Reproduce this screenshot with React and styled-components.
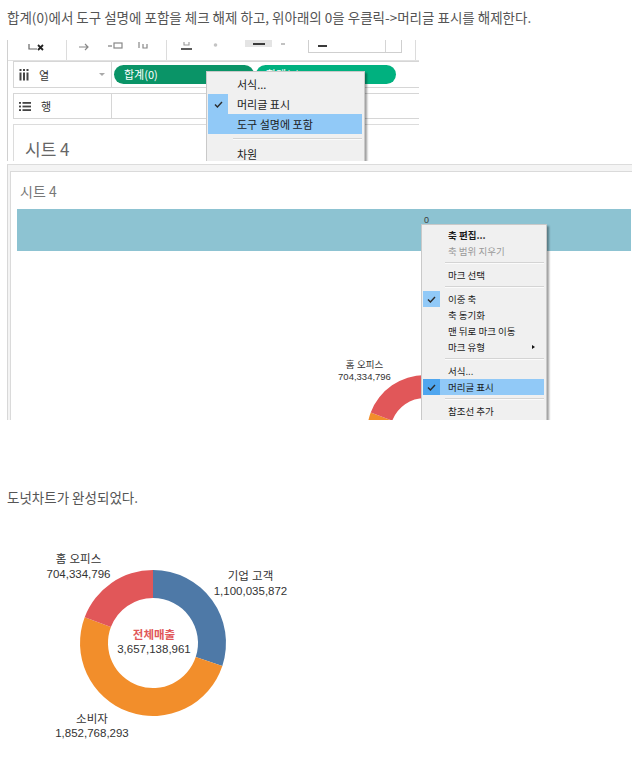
import React from "react";
import styled, { createGlobalStyle } from "styled-components";

const KR = `"Noto Sans CJK KR", "Noto Sans", sans-serif`;
const TAB = `"Liberation Sans", "Noto Sans CJK KR", sans-serif`;

const GlobalStyle = createGlobalStyle`
  html, body { margin: 0; padding: 0; background: #ffffff; }
  body { font-family: ${KR}; }
`;

const SEGMENTS = [
  { name: "기업 고객", value: 1100035872, color: "#4e79a7" },
  { name: "소비자", value: 1852768293, color: "#f28e2b" },
  { name: "홈 오피스", value: 704334796, color: "#e15759" },
];
const TOTAL = SEGMENTS.reduce((s, x) => s + x.value, 0);

function arcPath(cx, cy, R, r, a0, a1) {
  const pt = (rad, a) => [
    cx + rad * Math.sin((a * Math.PI) / 180),
    cy - rad * Math.cos((a * Math.PI) / 180),
  ];
  const [x0, y0] = pt(R, a0);
  const [x1, y1] = pt(R, a1);
  const [x2, y2] = pt(r, a1);
  const [x3, y3] = pt(r, a0);
  const large = a1 - a0 > 180 ? 1 : 0;
  return `M${x0} ${y0} A${R} ${R} 0 ${large} 1 ${x1} ${y1} L${x2} ${y2} A${r} ${r} 0 ${large} 0 ${x3} ${y3} Z`;
}

const Page = styled.div`
  width: 644px;
  height: 765px;
  box-sizing: border-box;
  padding-left: 7px;
  overflow: hidden;
  display: flex;
  flex-direction: column;
  align-items: flex-start;
`;

const Para = styled.p`
  margin: ${(p) => p.$mt}px 0 0;
  font-family: ${KR};
  font-size: 13.5px;
  line-height: 18px;
  color: #555;
  white-space: nowrap;
`;

/* ---------- screenshot 1 ---------- */
const Shot1 = styled.section`
  position: relative;
  margin-top: 14px;
  width: 412px;
  height: 121px;
  box-sizing: border-box;
  border-left: 1px solid #d0d0d0;
  background: #fff;
  overflow: hidden;
  display: flex;
  flex-direction: column;
`;

const Toolbar = styled.div`
  height: 20px;
  flex: none;
  border-bottom: 1px solid #e1e1e1;
  overflow: hidden;
`;

const ToolTrack = styled.div`
  display: flex;
  align-items: center;
  height: 30px;
  margin-top: -10px;
`;

const ToolSlot = styled.div`
  flex: none;
  margin-left: ${(p) => p.$ml}px;
  width: ${(p) => p.$w}px;
  height: 30px;
  display: flex;
  align-items: center;
  justify-content: center;
`;

const ToolDivider = styled.div`
  flex: none;
  margin-left: ${(p) => p.$ml}px;
  width: 1px;
  height: 30px;
  background: #dcdcdc;
`;

const ToolPressed = styled.div`
  flex: none;
  align-self: flex-start;
  margin-left: ${(p) => p.$ml}px;
  width: ${(p) => p.$w}px;
  height: 17px;
  background: #e4e4e4;
  display: flex;
  align-items: flex-end;
  justify-content: center;
  padding-bottom: 2px;
  box-sizing: border-box;
`;

const ToolCombo = styled.div`
  flex: none;
  align-self: flex-start;
  margin-left: ${(p) => p.$ml}px;
  width: ${(p) => p.$w}px;
  height: 23px;
  box-sizing: border-box;
  border: 1px solid #cfcfcf;
  display: flex;
  align-items: flex-end;
  padding: 0 0 5px 9px;
`;

const ComboArrowCell = styled.div`
  margin-left: auto;
  width: 15px;
  height: 100%;
  border-left: 1px solid #d5d5d5;
  margin-bottom: -5px;
`;

const ShelfRow = styled.div`
  display: flex;
  flex: none;
  margin: ${(p) => p.$mt}px 0 0 5px;
  height: ${(p) => p.$h}px;
`;

const ShelfLabel = styled.div`
  width: 99px;
  flex: none;
  box-sizing: border-box;
  border: 1px solid #d6d6d6;
  display: flex;
  align-items: center;
  padding-left: 5px;
  font-family: ${KR};
  font-size: 11px;
  color: #333;
`;

const ShelfName = styled.span`
  margin-left: 10px;
`;

const Caret = styled.span`
  margin-left: auto;
  margin-right: 6px;
  width: 0;
  height: 0;
  border-left: 3px solid transparent;
  border-right: 3px solid transparent;
  border-top: 3px solid #a9a9a9;
`;

const ShelfDrop = styled.div`
  flex: 1;
  box-sizing: border-box;
  border-top: 1px solid #d6d6d6;
  border-bottom: 1px solid #d6d6d6;
  padding: 3px 0 0 2px;
  display: flex;
  align-items: flex-start;
  gap: 2px;
`;

const Pill = styled.div`
  flex: none;
  width: 140px;
  height: 19px;
  border-radius: 10px;
  background: ${(p) => p.$bg};
  color: #fff;
  font-family: ${KR};
  font-size: 11px;
  line-height: 19px;
  padding-left: 10px;
  box-sizing: border-box;
`;

const SheetPanel = styled.div`
  flex: 1;
  margin: 5px 0 0 5px;
  border-top: 1px solid #dcdcdc;
  border-left: 1px solid #dcdcdc;
  padding: 13px 0 0 11px;
  font-family: ${KR};
  font-size: 17px;
  line-height: 22px;
  color: #666;
`;

/* ---------- context menus ---------- */
const SIZES = {
  lg: { font: 11, h: 20, check: 20, gap: 9, sep: 10, sepIndent: 25 },
  sm: { font: 9.5, h: 16, check: 17, gap: 8, sep: 8, sepIndent: 22 },
};

const Menu = styled.div`
  position: absolute;
  left: ${(p) => p.$left}px;
  top: ${(p) => p.$top}px;
  width: ${(p) => p.$width}px;
  box-sizing: border-box;
  background: #f0f0f0;
  border: 1px solid #c9c9c9;
  box-shadow: 2px 2px 2px rgba(0, 0, 0, 0.38);
  padding: 2px 2px 40px 1px;
  font-family: ${KR};
  font-size: ${(p) => SIZES[p.$size].font}px;
  color: #1b1b1b;
`;

const Item = styled.div`
  display: flex;
  align-items: center;
  height: ${(p) => SIZES[p.$size].h}px;
  background: ${(p) => (p.$active ? "#91c9f7" : "transparent")};
  color: ${(p) => (p.$disabled ? "#9a9a9a" : "#1b1b1b")};
  font-weight: ${(p) => (p.$bold ? 700 : 400)};
  white-space: nowrap;
`;

const CheckCell = styled.div`
  flex: none;
  width: ${(p) => SIZES[p.$size].check}px;
  height: 100%;
  display: flex;
  align-items: center;
  justify-content: center;
  background: ${(p) =>
    p.$checked ? (p.$active ? "#4fa6ef" : "#91c9f7") : "transparent"};
`;

const ItemText = styled.span`
  margin-left: ${(p) => SIZES[p.$size].gap}px;
`;

const SubArrow = styled.span`
  margin-left: auto;
  margin-right: 9px;
  width: 0;
  height: 0;
  border-top: 2.5px solid transparent;
  border-bottom: 2.5px solid transparent;
  border-left: 3px solid #111;
`;

const Sep = styled.div`
  height: ${(p) => SIZES[p.$size].sep}px;
  margin-left: ${(p) => SIZES[p.$size].sepIndent}px;
  display: flex;
  flex-direction: column;
  justify-content: center;
  &::before {
    content: "";
    display: block;
    height: 1px;
    background: #d4d4d4;
  }
  &::after {
    content: "";
    display: block;
    height: 1px;
    background: #fbfbfb;
  }
`;

const CheckMark = () => (
  <svg width="9" height="7" viewBox="0 0 9 7">
    <path d="M1 3.6 L3.4 6 L8 1" fill="none" stroke="#2b2b2b" strokeWidth="1.4" />
  </svg>
);

function ContextMenu({ size, items, ...pos }) {
  return (
    <Menu $size={size} {...pos}>
      {items.map((it, i) =>
        it.sep ? (
          <Sep key={i} $size={size} />
        ) : (
          <Item
            key={i}
            $size={size}
            $active={it.active}
            $disabled={it.disabled}
            $bold={it.bold}
          >
            <CheckCell $size={size} $checked={it.checked} $active={it.active}>
              {it.checked && <CheckMark />}
            </CheckCell>
            <ItemText $size={size}>{it.label}</ItemText>
            {it.sub && <SubArrow />}
          </Item>
        )
      )}
    </Menu>
  );
}

/* ---------- screenshot 2 ---------- */
const Shot2 = styled.section`
  position: relative;
  margin-top: 3px;
  width: 625px;
  height: 256px;
  box-sizing: border-box;
  border-top: 1px solid #dcdcdc;
  border-left: 1px solid #d8d8d8;
  background: #f4f4f4;
  padding: 6px 0 0 2px;
  overflow: hidden;
  display: flex;
`;

const Panel = styled.div`
  flex: 1;
  background: #fff;
  border-top: 1px solid #dadada;
  border-left: 1px solid #dadada;
  padding: 0 1px 0 6px;
  display: flex;
  flex-direction: column;
`;

const PanelTitle = styled.div`
  margin: 9px 0 0 3px;
  font-family: ${KR};
  font-size: 14px;
  line-height: 20px;
  color: #777;
`;

const AxisBar = styled.div`
  margin-top: 8px;
  height: 42px;
  flex: none;
  background: #8dc3d2;
  box-sizing: border-box;
  padding: 6px 0 0 407px;
  font-family: ${TAB};
  font-size: 9px;
  line-height: 10px;
  color: #3d3d3d;
`;

const ChartArea = styled.div`
  position: relative;
  flex: 1;
`;

/* ---------- donut ---------- */
const DonutSvg = styled.svg`
  position: absolute;
  left: 0;
  top: 0;
`;

function Donut({ cx, cy, R, r, width, height }) {
  let a = 0;
  return (
    <DonutSvg width={width} height={height} viewBox={`0 0 ${width} ${height}`}>
      {SEGMENTS.map((s) => {
        const a0 = a;
        a += (s.value / TOTAL) * 360;
        return <path key={s.name} d={arcPath(cx, cy, R, r, a0, a)} fill={s.color} />;
      })}
    </DonutSvg>
  );
}

const ChartLabel = styled.div`
  position: absolute;
  left: ${(p) => p.$x}px;
  top: ${(p) => p.$y}px;
  transform: translate(-50%, -50%);
  display: flex;
  flex-direction: column;
  align-items: center;
  font-family: ${TAB};
  font-size: ${(p) => p.$fs}px;
  line-height: ${(p) => p.$lh}px;
  color: #333;
  white-space: nowrap;
`;

const CenterTitle = styled.span`
  font-family: ${KR};
  font-weight: 700;
  color: #e15759;
`;

const FinalChart = styled.div`
  position: relative;
  margin-top: 34px;
  width: 320px;
  height: 215px;
  flex: none;
`;

/* ---------- small toolbar icons ---------- */
const IconClear = () => (
  <svg width="17" height="14" viewBox="0 0 17 14">
    <path d="M1 6 V11 H9" fill="none" stroke="#666" strokeWidth="1.2" />
    <path d="M10 7 L15 12 M15 7 L10 12" stroke="#222" strokeWidth="1.8" />
  </svg>
);
const IconSwap = () => (
  <svg width="12" height="14" viewBox="0 0 12 14">
    <path d="M1 9 H10 M7 6 L10 9 L7 12" fill="none" stroke="#888" strokeWidth="1.2" />
  </svg>
);
const IconSortA = () => (
  <svg width="16" height="14" viewBox="0 0 16 14">
    <path d="M1 8 H5" stroke="#888" strokeWidth="1.3" />
    <rect x="7" y="5" width="8" height="5" fill="none" stroke="#888" strokeWidth="1.2" />
  </svg>
);
const IconSortB = () => (
  <svg width="11" height="14" viewBox="0 0 11 14">
    <path d="M2 4 V10 M6 6 V10 H10 V6" fill="none" stroke="#888" strokeWidth="1.2" />
  </svg>
);
const IconUnderline = () => (
  <svg width="13" height="14" viewBox="0 0 13 14">
    <path d="M4 4 V7 H9 V4" fill="none" stroke="#999" strokeWidth="1.1" />
    <path d="M1 11 H12" stroke="#333" strokeWidth="1.6" />
  </svg>
);
const IconDot = () => (
  <svg width="5" height="14" viewBox="0 0 5 14">
    <circle cx="2.5" cy="7" r="1.8" fill="#c4c4c4" />
  </svg>
);
const IconMark = () => (
  <svg width="7" height="14" viewBox="0 0 7 14">
    <path d="M1 6 L5 6" stroke="#999" strokeWidth="1.2" />
  </svg>
);
const PressedLine = styled.div`
  width: 12px;
  height: 2px;
  background: #3a3a3a;
`;
const ComboLine = styled.div`
  width: 9px;
  height: 2px;
  background: #3a3a3a;
`;

const IconColumns = () => (
  <svg width="10" height="12" viewBox="0 0 10 12">
    <g fill="#444">
      <rect x="0.5" y="0" width="2" height="2" />
      <rect x="0.5" y="3.5" width="2" height="8" />
      <rect x="4" y="0" width="2" height="2" />
      <rect x="4" y="3.5" width="2" height="8" />
      <rect x="7.5" y="0" width="2" height="2" />
      <rect x="7.5" y="3.5" width="2" height="8" />
    </g>
  </svg>
);
const IconRows = () => (
  <svg width="12" height="9" viewBox="0 0 12 9">
    <g fill="#444">
      <rect x="0" y="0" width="2" height="1.8" />
      <rect x="3.5" y="0" width="8.5" height="1.8" />
      <rect x="0" y="3.6" width="2" height="1.8" />
      <rect x="3.5" y="3.6" width="8.5" height="1.8" />
      <rect x="0" y="7.2" width="2" height="1.8" />
      <rect x="3.5" y="7.2" width="8.5" height="1.8" />
    </g>
  </svg>
);

const MENU1 = [
  { label: "서식..." },
  { label: "머리글 표시", checked: true },
  { label: "도구 설명에 포함", active: true },
  { sep: true },
  { label: "차원" },
];

const MENU2 = [
  { label: "축 편집...", bold: true },
  { label: "축 범위 지우기", disabled: true },
  { sep: true },
  { label: "마크 선택" },
  { sep: true },
  { label: "이중 축", checked: true },
  { label: "축 동기화" },
  { label: "맨 뒤로 마크 이동" },
  { label: "마크 유형", sub: true },
  { sep: true },
  { label: "서식..." },
  { label: "머리글 표시", checked: true, active: true },
  { sep: true },
  { label: "참조선 추가" },
];

const fmt = (n) => n.toLocaleString("en-US");

export default function App() {
  return (
    <>
      <GlobalStyle />
      <Page>
        <Para $mt={8}>
          합계(0)에서 도구 설명에 포함을 체크 해제 하고, 위아래의 0을 우클릭-&gt;머리글 표시를 해제한다.
        </Para>

        <Shot1>
          <Toolbar>
            <ToolTrack>
              <ToolSlot $ml={20} $w={17}><IconClear /></ToolSlot>
              <ToolDivider $ml={21} />
              <ToolSlot $ml={11} $w={12}><IconSwap /></ToolSlot>
              <ToolSlot $ml={17} $w={16}><IconSortA /></ToolSlot>
              <ToolSlot $ml={14} $w={11}><IconSortB /></ToolSlot>
              <ToolDivider $ml={18} />
              <ToolSlot $ml={13} $w={13}><IconUnderline /></ToolSlot>
              <ToolSlot $ml={20} $w={5}><IconDot /></ToolSlot>
              <ToolPressed $ml={27} $w={27}><PressedLine /></ToolPressed>
              <ToolSlot $ml={8} $w={7}><IconMark /></ToolSlot>
              <ToolCombo $ml={21} $w={94}>
                <ComboLine />
                <ComboArrowCell />
              </ToolCombo>
              <ToolDivider $ml={13} />
            </ToolTrack>
          </Toolbar>

          <ShelfRow $mt={0} $h={27}>
            <ShelfLabel>
              <IconColumns />
              <ShelfName>열</ShelfName>
              <Caret />
            </ShelfLabel>
            <ShelfDrop>
              <Pill $bg="#0a9467">합계(0)</Pill>
              <Pill $bg="#00b17f">합계(0)</Pill>
            </ShelfDrop>
          </ShelfRow>

          <ShelfRow $mt={5} $h={26}>
            <ShelfLabel>
              <IconRows />
              <ShelfName>행</ShelfName>
            </ShelfLabel>
            <ShelfDrop />
          </ShelfRow>

          <SheetPanel>시트 4</SheetPanel>

          <ContextMenu size="lg" items={MENU1} $left={198} $top={31} $width={159} />
        </Shot1>

        <Shot2>
          <Panel>
            <PanelTitle>시트 4</PanelTitle>
            <AxisBar>0</AxisBar>
            <ChartArea>
              <Donut cx={408} cy={182} R={58} r={35} width={614} height={250} />
              <ChartLabel $x={347.5} $y={120} $fs={9.5} $lh={12}>
                <span>홈 오피스</span>
                <span>{fmt(704334796)}</span>
              </ChartLabel>
            </ChartArea>
          </Panel>
          <ContextMenu size="sm" items={MENU2} $left={413} $top={59} $width={126} />
        </Shot2>

        <Para $mt={68}>도넛차트가 완성되었다.</Para>

        <FinalChart>
          <Donut cx={146} cy={103} R={73} r={45} width={320} height={215} />
          <ChartLabel $x={71.5} $y={26} $fs={11.5} $lh={14.5}>
            <span>홈 오피스</span>
            <span>{fmt(704334796)}</span>
          </ChartLabel>
          <ChartLabel $x={243.5} $y={43} $fs={11.5} $lh={14.5}>
            <span>기업 고객</span>
            <span>{fmt(1100035872)}</span>
          </ChartLabel>
          <ChartLabel $x={147} $y={101} $fs={11.5} $lh={14.5}>
            <CenterTitle>전체매출</CenterTitle>
            <span>{fmt(TOTAL)}</span>
          </ChartLabel>
          <ChartLabel $x={85} $y={185.5} $fs={11.5} $lh={14.5}>
            <span>소비자</span>
            <span>{fmt(1852768293)}</span>
          </ChartLabel>
        </FinalChart>
      </Page>
    </>
  );
}
